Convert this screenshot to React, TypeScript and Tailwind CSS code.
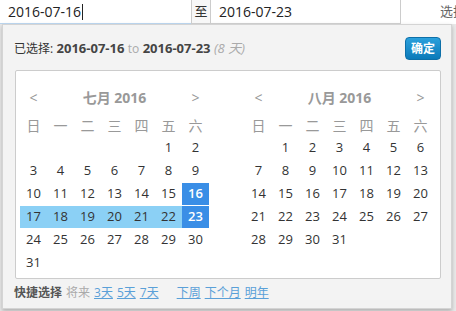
import React from "react";

const font = { fontFamily: '"Open Sans", "Noto Sans CJK SC", sans-serif' };

const weekDays = ["日", "一", "二", "三", "四", "五", "六"];

type Month = { title: string; offset: number; days: number };

const months: Month[] = [
  { title: "七月 2016", offset: 5, days: 31 },
  { title: "八月 2016", offset: 1, days: 31 },
];

// selected range lives in July
const isJuly = (m: Month) => m.title.startsWith("七");

function Calendar({ month }: { month: Month }) {
  const cells: (number | null)[] = [];
  for (let i = 0; i < month.offset; i++) cells.push(null);
  for (let d = 1; d <= month.days; d++) cells.push(d);
  while (cells.length % 7) cells.push(null);
  const rows: (number | null)[][] = [];
  for (let i = 0; i < cells.length; i += 7) rows.push(cells.slice(i, i + 7));

  const cellClass = (d: number | null) => {
    if (!d || !isJuly(month)) return "text-[#333]";
    if (d === 16 || d === 23) return "bg-[#3a8ee6] text-white font-semibold";
    if (d > 16 && d < 23) return "bg-[#8bd0f5] text-[#333]";
    return "text-[#333]";
  };

  return (
    <div className="w-[189px]">
      <div className="flex h-[24px] items-center text-[14px] text-[#999]">
        <span className="w-[27px] text-center">&lt;</span>
        <span className="flex-1 text-center font-bold text-[#999]">{month.title}</span>
        <span className="w-[27px] text-center">&gt;</span>
      </div>
      <div className="mt-[7px] grid h-[20px] grid-cols-7 text-[14px] leading-[20px] text-[#999]">
        {weekDays.map((w) => (
          <span key={w} className="text-center">{w}</span>
        ))}
      </div>
      <div className="flex flex-col">
        {rows.map((row, i) => (
          <div key={i} className="grid h-[23px] grid-cols-7 items-center">
            {row.map((d, j) => (
              <span
                key={j}
                className={`flex h-[22px] items-center justify-center text-[13px] ${cellClass(d)}`}
              >
                {d ?? ""}
              </span>
            ))}
          </div>
        ))}
      </div>
    </div>
  );
}

export default function App() {
  return (
    <div className="h-[311px] w-[456px] overflow-hidden bg-[#e9e9e9]" style={font}>
      {/* inputs */}
      <div className="flex h-[24px] bg-white">
        <div className="flex w-[191px] items-center border-b border-[#b9d3ec] pl-[8px] text-[14px] text-[#222]">
          2016-07-16<span className="ml-px h-[16px] w-px bg-[#222]" />
        </div>
        <div className="flex w-[20px] items-center justify-center border-x border-b border-[#ccc] bg-[#f7f7f7] text-[13px] text-[#333]">
          至
        </div>
        <div className="flex w-[190px] items-center border-b border-r border-[#ccc] pl-[8px] text-[14px] text-[#222]">
          2016-07-23
        </div>
        <div className="flex flex-1 items-center overflow-hidden whitespace-nowrap pl-[39px] text-[13px] text-[#666]">
          选择
        </div>
      </div>

      {/* popup */}
      <div className="ml-[2px] h-[285px] w-[450px] border border-[#d4d4d4] bg-[#f3f3f3] shadow-[0_2px_4px_rgba(0,0,0,0.25)]">
        <div className="flex h-[45px] items-center justify-between pl-[11px] pr-[10px] pt-[2px]">
          <div className="text-[13px] text-[#333]">
            <span className="text-[12px]">已选择:</span> <b className="text-[#444]">2016-07-16</b>{" "}
            <span className="text-[12px] text-[#aaa]">to</span>{" "}
            <b className="text-[#444]">2016-07-23</b>{" "}
            <i className="text-[#aaa]">(8 天)</i>
          </div>
          <button className="h-[23px] w-[36px] rounded-[4px] border border-[#0d6fa8] bg-gradient-to-b from-[#2aa0dc] to-[#0a7ab9] text-[12px] font-bold text-white">
            确定
          </button>
        </div>

        <div className="ml-[12px] flex h-[209px] w-[426px] gap-[36px] rounded-[2px] border border-[#ccc] bg-white pl-[4px] pt-[14px]">
          {months.map((m) => (
            <Calendar key={m.title} month={m} />
          ))}
        </div>

        <div className="flex h-[28px] items-center gap-[4px] whitespace-nowrap pl-[11px] text-[12px]">
          <b className="text-[#555]">快捷选择</b>
          <span className="text-[#aaa]">将来</span>
          <span className="text-[#5aa0d8] underline">3天</span>
          <span className="text-[#5aa0d8] underline">5天</span>
          <span className="text-[#5aa0d8] underline">7天</span>
          <span className="ml-[14px] text-[#5aa0d8] underline">下周</span>
          <span className="text-[#5aa0d8] underline">下个月</span>
          <span className="text-[#5aa0d8] underline">明年</span>
        </div>
      </div>
    </div>
  );
}
